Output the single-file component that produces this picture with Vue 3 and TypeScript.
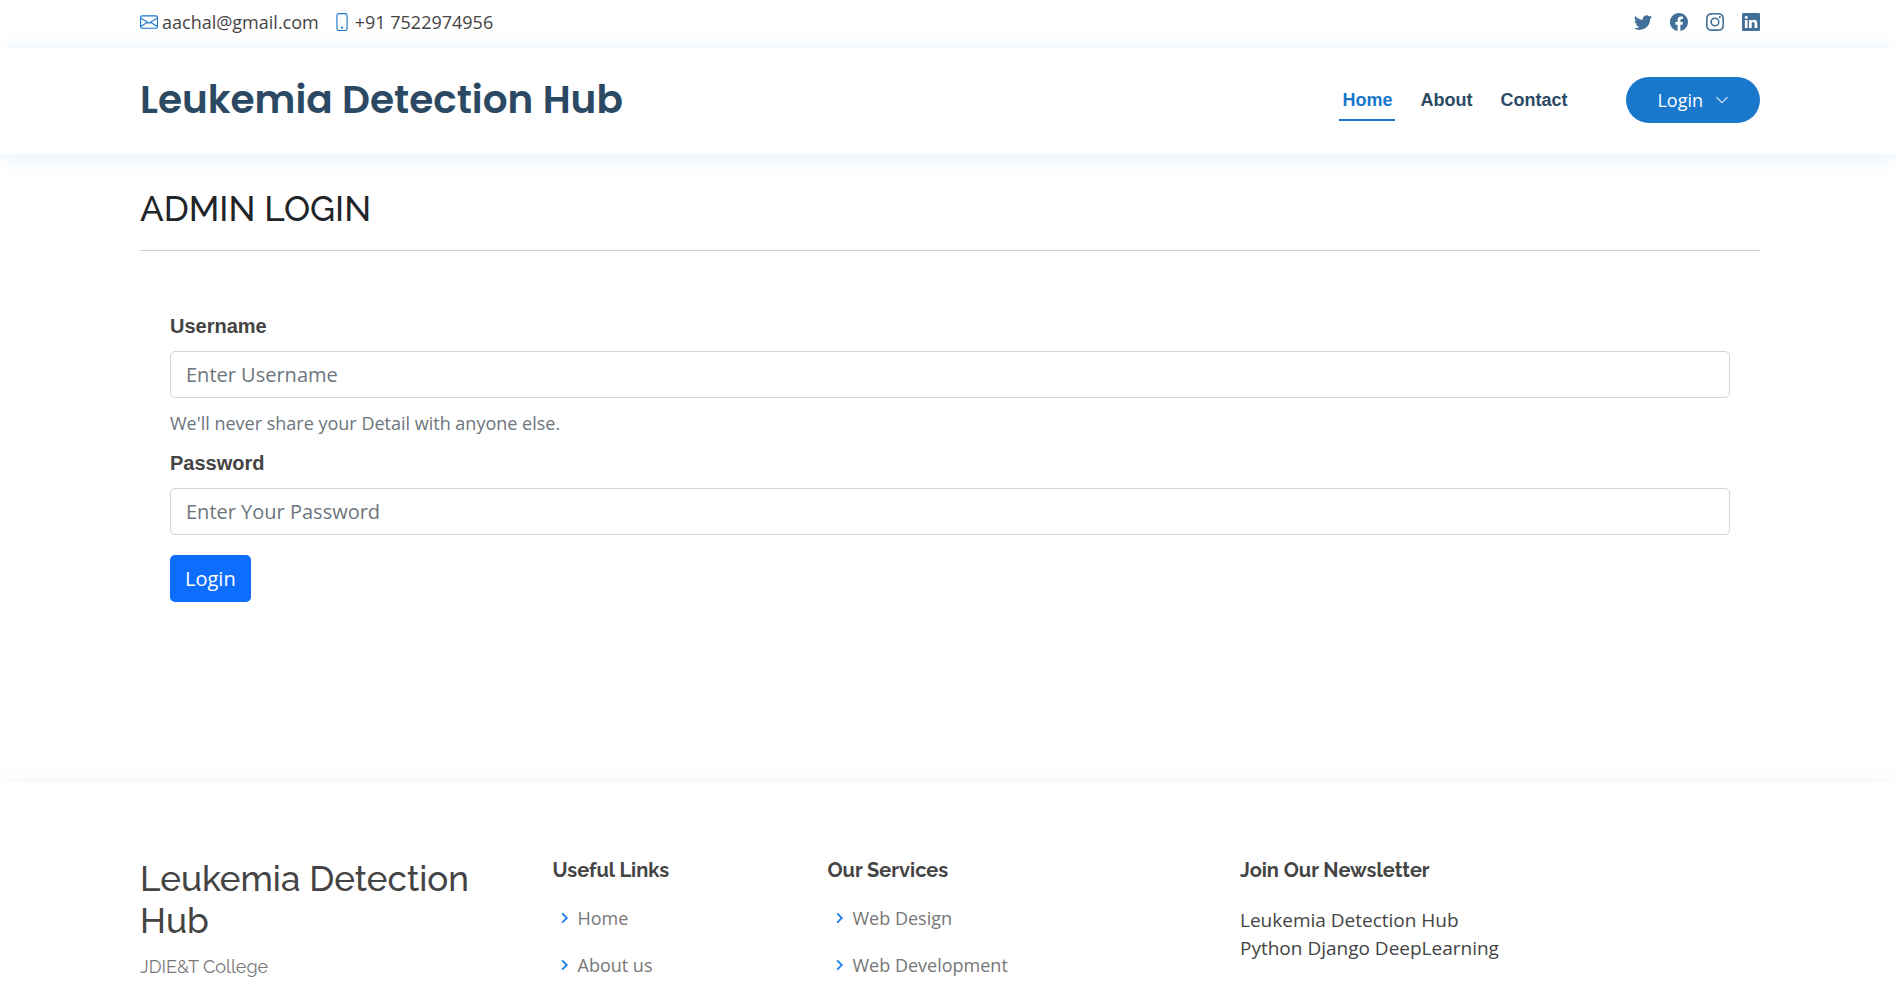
<script setup lang="ts">
import { ref } from 'vue'

interface LinkItem {
  label: string
  href: string
}
interface SocialItem {
  label: string
  paths: string[]
}

const navLinks: LinkItem[] = [
  { label: 'Home', href: '#home' },
  { label: 'About', href: '#about' },
  { label: 'Contact', href: '#contact' },
]
const activeLink = 'Home'

const socials: SocialItem[] = [
  {
    label: 'Twitter',
    paths: [
      'M5.026 15c6.038 0 9.341-5.003 9.341-9.334 0-.14 0-.282-.006-.422A6.685 6.685 0 0 0 16 3.542a6.658 6.658 0 0 1-1.889.518 3.301 3.301 0 0 0 1.447-1.817 6.533 6.533 0 0 1-2.087.793A3.286 3.286 0 0 0 7.875 6.03a9.325 9.325 0 0 1-6.767-3.429 3.289 3.289 0 0 0 1.018 4.382A3.323 3.323 0 0 1 .64 6.575v.045a3.288 3.288 0 0 0 2.632 3.218 3.203 3.203 0 0 1-.865.115 3.23 3.23 0 0 1-.614-.057 3.283 3.283 0 0 0 3.067 2.277A6.588 6.588 0 0 1 .78 13.58a6.32 6.32 0 0 1-.78-.045A9.344 9.344 0 0 0 5.026 15z',
    ],
  },
  {
    label: 'Facebook',
    paths: [
      'M16 8.049c0-4.446-3.582-8.05-8-8.05C3.58 0-.002 3.603-.002 8.05c0 4.017 2.926 7.347 6.75 7.951v-5.625h-2.03V8.05H6.75V6.275c0-2.017 1.195-3.131 3.022-3.131.876 0 1.791.157 1.791.157v1.98h-1.009c-.993 0-1.303.621-1.303 1.258v1.51h2.218l-.354 2.326H9.25V16c3.824-.604 6.75-3.934 6.75-7.951z',
    ],
  },
  {
    label: 'Instagram',
    paths: [
      'M8 0C5.829 0 5.556.01 4.703.048 3.85.088 3.269.222 2.76.42a3.917 3.917 0 0 0-1.417.923A3.927 3.927 0 0 0 .42 2.76C.222 3.268.087 3.85.048 4.7.01 5.555 0 5.827 0 8.001c0 2.172.01 2.444.048 3.297.04.852.174 1.433.372 1.942.205.526.478.972.923 1.417.444.445.89.719 1.416.923.51.198 1.09.333 1.942.372C5.555 15.99 5.827 16 8 16s2.444-.01 3.298-.048c.851-.04 1.434-.174 1.943-.372a3.916 3.916 0 0 0 1.416-.923c.445-.445.718-.891.923-1.417.197-.509.332-1.09.372-1.942C15.99 10.445 16 10.173 16 8s-.01-2.445-.048-3.299c-.04-.851-.175-1.433-.372-1.941a3.926 3.926 0 0 0-.923-1.417A3.911 3.911 0 0 0 13.24.42c-.51-.198-1.092-.333-1.943-.372C10.443.01 10.172 0 7.998 0h.003zm-.717 1.442h.718c2.136 0 2.389.007 3.232.046.78.035 1.204.166 1.486.275.373.145.64.319.92.599.28.28.453.546.598.92.11.281.24.705.275 1.485.039.843.047 1.096.047 3.231s-.008 2.389-.047 3.232c-.035.78-.166 1.203-.275 1.485a2.47 2.47 0 0 1-.599.919c-.28.28-.546.453-.92.598-.28.11-.704.24-1.485.276-.843.038-1.096.047-3.232.047s-2.39-.009-3.233-.047c-.78-.036-1.203-.166-1.485-.276a2.478 2.478 0 0 1-.92-.598 2.48 2.48 0 0 1-.6-.92c-.109-.281-.24-.705-.275-1.485-.038-.843-.046-1.096-.046-3.233 0-2.136.008-2.388.046-3.231.036-.78.166-1.204.276-1.486.145-.373.319-.64.599-.92.28-.28.546-.453.92-.598.282-.11.705-.24 1.485-.276.738-.034 1.024-.044 2.515-.045v.002zm4.988 1.328a.96.96 0 1 0 0 1.92.96.96 0 0 0 0-1.92zm-4.27 1.122a4.109 4.109 0 1 0 0 8.217 4.109 4.109 0 0 0 0-8.217zm0 1.441a2.667 2.667 0 1 1 0 5.334 2.667 2.667 0 0 1 0-5.334z',
    ],
  },
  {
    label: 'LinkedIn',
    paths: [
      'M0 1.146C0 .513.526 0 1.175 0h13.65C15.474 0 16 .513 16 1.146v13.708c0 .633-.526 1.146-1.175 1.146H1.175C.526 16 0 15.487 0 14.854V1.146zm4.943 12.248V6.169H2.542v7.225h2.401zm-1.2-8.212c.837 0 1.358-.554 1.358-1.248-.015-.709-.52-1.248-1.342-1.248-.822 0-1.359.54-1.359 1.248 0 .694.521 1.248 1.327 1.248h.016zm4.908 8.212V9.359c0-.216.016-.432.08-.586.173-.431.568-.878 1.232-.878.869 0 1.216.662 1.216 1.634v3.865h2.401V9.25c0-2.22-1.184-3.252-2.764-3.252-1.274 0-1.845.7-2.165 1.193v.025h-.016a5.54 5.54 0 0 1 .016-.025V6.169h-2.4c.03.678 0 7.225 0 7.225h2.4z',
    ],
  },
]

const usefulLinks: LinkItem[] = [
  { label: 'Home', href: '#home' },
  { label: 'About us', href: '#about' },
]
const services: LinkItem[] = [
  { label: 'Web Design', href: '#design' },
  { label: 'Web Development', href: '#development' },
]
const linkGroups = [
  { title: 'Useful Links', wide: false, items: usefulLinks },
  { title: 'Our Services', wide: true, items: services },
]

const username = ref('')
const password = ref('')
</script>

<template>
  <div class="page">
    <div class="topbar gutters">
      <div class="contact">
        <a class="contact-item" href="mailto:aachal@gmail.com">
          <svg class="icon" viewBox="0 0 16 16" aria-hidden="true">
            <path d="M0 4a2 2 0 0 1 2-2h12a2 2 0 0 1 2 2v8a2 2 0 0 1-2 2H2a2 2 0 0 1-2-2V4Zm2-1a1 1 0 0 0-1 1v.217l7 4.2 7-4.2V4a1 1 0 0 0-1-1H2Zm13 2.383-4.708 2.825L15 11.105V5.383Zm-.034 6.876-5.64-3.471L8 9.583l-1.326-.795-5.64 3.47A1 1 0 0 0 2 13h12a1 1 0 0 0 .966-.741ZM1 11.105l4.708-2.897L1 5.383v5.722Z" />
          </svg>
          <span>aachal@gmail.com</span>
        </a>
        <span class="contact-item">
          <svg class="icon" viewBox="0 0 16 16" aria-hidden="true">
            <path d="M11 1a1 1 0 0 1 1 1v12a1 1 0 0 1-1 1H5a1 1 0 0 1-1-1V2a1 1 0 0 1 1-1h6zM5 0a2 2 0 0 0-2 2v12a2 2 0 0 0 2 2h6a2 2 0 0 0 2-2V2a2 2 0 0 0-2-2H5z" />
            <path d="M8 14a1 1 0 1 0 0-2 1 1 0 0 0 0 2z" />
          </svg>
          <span>+91 7522974956</span>
        </span>
      </div>
      <div class="socials">
        <a v-for="s in socials" :key="s.label" href="#" :aria-label="s.label">
          <svg class="icon" viewBox="0 0 16 16" aria-hidden="true">
            <path v-for="p in s.paths" :key="p" :d="p" />
          </svg>
        </a>
      </div>
    </div>

    <header class="header gutters">
      <a class="logo" href="#home">Leukemia Detection Hub</a>
      <nav class="nav">
        <a
          v-for="link in navLinks"
          :key="link.label"
          class="nav-link"
          :class="{ active: link.label === activeLink }"
          :href="link.href"
        >{{ link.label }}</a>
        <button class="login-menu" type="button" aria-haspopup="true">
          Login
          <svg viewBox="0 0 16 16" aria-hidden="true">
            <path d="M1.646 4.646a.5.5 0 0 1 .708 0L8 10.293l5.646-5.647a.5.5 0 0 1 .708.708l-6 6a.5.5 0 0 1-.708 0l-6-6a.5.5 0 0 1 0-.708z" />
          </svg>
        </button>
      </nav>
    </header>

    <main class="main gutters">
      <h1 class="title">ADMIN LOGIN</h1>
      <form class="form" @submit.prevent>
        <label class="label" for="username">Username</label>
        <input id="username" v-model="username" class="field" type="text" placeholder="Enter Username" aria-describedby="hint">
        <small id="hint" class="hint">We'll never share your Detail with anyone else.</small>
        <label class="label" for="password">Password</label>
        <input id="password" v-model="password" class="field" type="password" placeholder="Enter Your Password">
        <button class="submit" type="submit">Login</button>
      </form>
    </main>

    <footer class="footer gutters">
      <div class="footer-grid">
        <section class="span-3">
          <h2 class="footer-brand">Leukemia Detection Hub</h2>
          <p class="college">JDIE&amp;T College</p>
        </section>
        <section v-for="g in linkGroups" :key="g.title" :class="g.wide ? 'span-3' : 'span-2'">
          <h3 class="footer-title">{{ g.title }}</h3>
          <ul class="links">
            <li v-for="item in g.items" :key="item.label">
              <svg viewBox="0 0 24 24" aria-hidden="true">
                <path d="M10.707 17.707 16.414 12l-5.707-5.707-1.414 1.414L13.586 12l-4.293 4.293z" />
              </svg>
              <a :href="item.href">{{ item.label }}</a>
            </li>
          </ul>
        </section>
        <section class="span-4">
          <h3 class="footer-title">Join Our Newsletter</h3>
          <p class="news">Leukemia Detection Hub<br>Python Django DeepLearning</p>
        </section>
      </div>
    </footer>
  </div>
</template>

<style>
body {
  margin: 0;
  background: #fff;
}
</style>

<style scoped>
.page {
  display: flex;
  flex-direction: column;
  min-height: 100vh;
  overflow: hidden;
  color: #444;
  font: 19px/28px "Open Sans", "Noto Sans", sans-serif;
}
.page *,
.page {
  box-sizing: border-box;
}
a {
  color: inherit;
  text-decoration: none;
}
.gutters {
  padding-left: 140px;
  padding-right: 137px;
}
.icon {
  display: block;
  width: 18px;
  height: 18px;
  fill: currentColor;
}

.topbar {
  display: flex;
  justify-content: space-between;
  align-items: center;
  height: 48px;
  padding-bottom: 4px;
  font-size: 18px;
}
.contact {
  display: flex;
  gap: 14px;
}
.contact-item {
  display: flex;
  align-items: center;
  gap: 4px;
}
.contact-item .icon {
  color: #1977cc;
}
.socials {
  display: flex;
  gap: 18px;
  color: #437099;
}

.header {
  position: relative;
  display: flex;
  justify-content: space-between;
  align-items: center;
  height: 106px;
  padding-bottom: 2px;
  background: #fff;
  box-shadow: 0 3px 19px rgba(25, 119, 204, 0.1);
}
.logo {
  color: #2c4964;
  font: 600 39px/48px Poppins, Inter, "Open Sans", sans-serif;
}
.nav {
  display: flex;
  align-items: center;
}
.nav-link {
  margin-right: 22px;
  padding: 8px 3px 7px;
  border-bottom: 2px solid transparent;
  color: #2c4964;
  font: 700 18px/24px "Liberation Sans", Arial, sans-serif;
}
.nav-link.active {
  color: #1977cc;
  border-color: #1977cc;
}
.login-menu {
  display: flex;
  align-items: center;
  gap: 12px;
  height: 46px;
  margin-left: 34px;
  padding: 0 31px;
  border: 0;
  border-radius: 23px;
  background: #1977cc;
  color: #fff;
  font: 18px/24px "Open Sans", sans-serif;
}
.login-menu svg {
  width: 14px;
  height: 14px;
  fill: currentColor;
}

.main {
  flex: 1;
  padding-top: 34px;
}
.title {
  margin: 0;
  padding-bottom: 20px;
  border-bottom: 1px solid #ccced0;
  color: #212529;
  font: 500 35px/42px Raleway, Lato, sans-serif;
}
.form {
  display: flex;
  flex-direction: column;
  align-items: flex-start;
  padding: 60px 30px 0;
}
.label {
  margin-bottom: 10px;
  font: 700 20px/30px "Liberation Sans", Arial, sans-serif;
}
.field {
  width: 100%;
  height: 47px;
  padding: 0 15px;
  border: 1px solid #ced4da;
  border-radius: 5px;
  background: #fff;
  color: #212529;
  font: 20px/30px "Open Sans", sans-serif;
}
.field::placeholder {
  color: #6c757d;
  opacity: 1;
}
.hint {
  margin: 12px 0;
  color: #6c757d;
  font-size: 18px;
  line-height: 26px;
}
.submit {
  height: 47px;
  margin-top: 20px;
  padding: 0 15px;
  border: 0;
  border-radius: 5px;
  background: #0d6efd;
  color: #fff;
  font: 20px/30px "Open Sans", sans-serif;
}

.footer {
  min-height: 205px;
  padding-top: 76px;
  background: #fff;
  box-shadow: 0 3px 19px rgba(25, 119, 204, 0.1);
}
.footer-grid {
  display: grid;
  grid-template-columns: repeat(12, 1fr);
  column-gap: 30px;
}
.span-2 {
  grid-column: span 2;
}
.span-3 {
  grid-column: span 3;
}
.span-4 {
  grid-column: span 4;
}
.footer-brand {
  margin: 0 0 10px;
  font: 500 35px/42px Raleway, Lato, sans-serif;
}
.college {
  margin: 0;
  color: #777;
  font: 400 18px/30px Raleway, Lato, sans-serif;
}
.footer-title {
  margin: 0 0 24px;
  font: 700 20px/24px Raleway, Lato, sans-serif;
}
.links {
  display: grid;
  gap: 23px;
  margin: 0;
  padding: 0;
  list-style: none;
}
.links li {
  display: flex;
  align-items: center;
  gap: 3px;
  color: #777;
  font-size: 18px;
  line-height: 24px;
}
.links svg {
  width: 22px;
  height: 22px;
  fill: #1f7fe8;
}
.news {
  margin: 0;
}
</style>
